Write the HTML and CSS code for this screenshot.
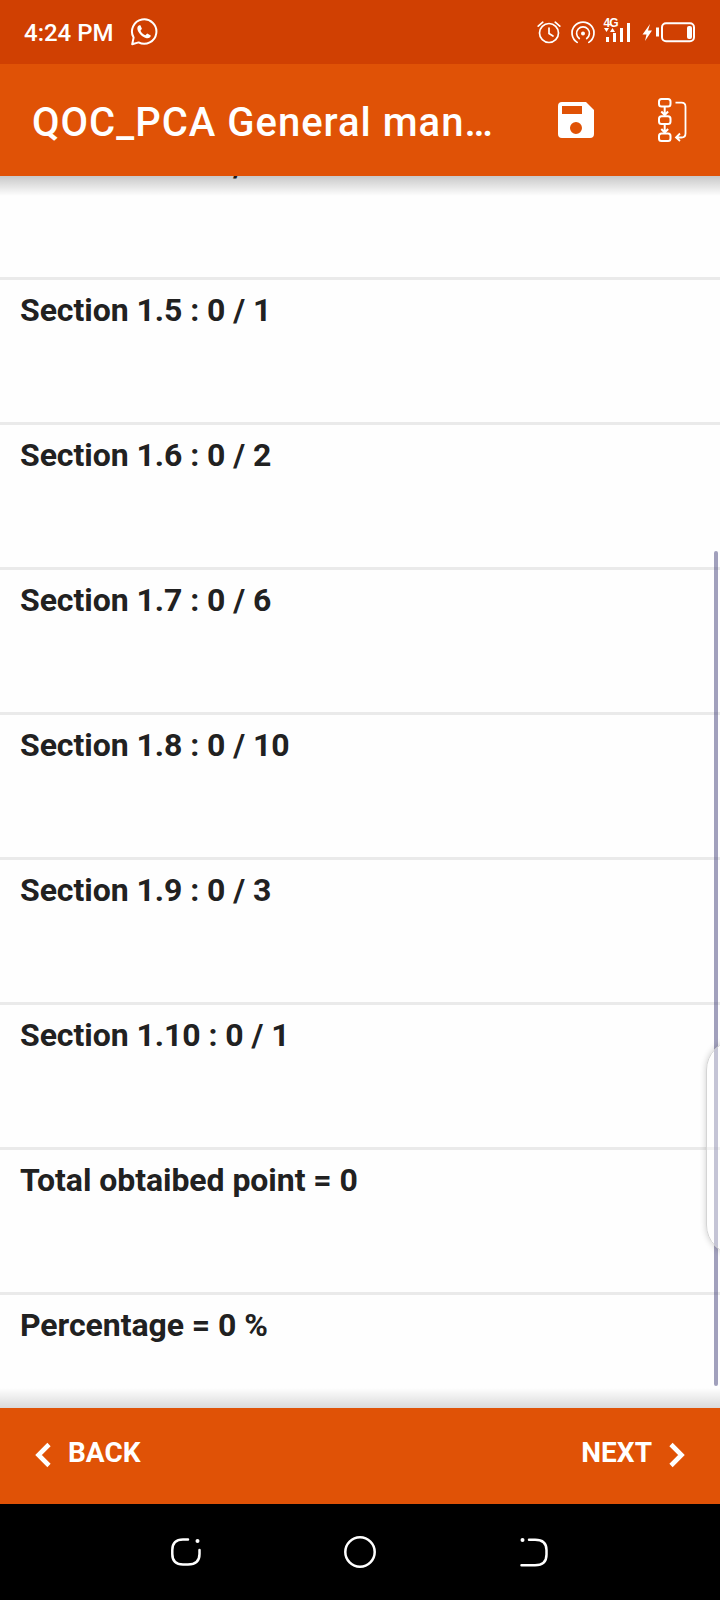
FILE: index.html
```html
<!DOCTYPE html>
<html lang="en">
<head>
<meta charset="utf-8">
<title>QOC_PCA General management</title>
<link rel="stylesheet" href="styles.css">
</head>
<body>
<div class="screen">
  <div class="status">
    <span class="time">4:24 PM</span>
    <svg class="whatsapp" width="28" height="30" viewBox="0 0 28 30" fill="none" stroke="#fff">
      <path d="M2.2 27.2 3.6 20.6A12.2 12.2 0 1 1 8.6 25.4Z" stroke-width="2" stroke-linejoin="round"/>
      <path d="M9.2 8.2c-1.6.8-2.3 2.6-1.6 4.8 1.400 4 5 7.300 9 8.200 2.200.4 4-.7 4.200-2.700l-3.600-2-1.800 1.800c-2.200-.8-4-2.500-4.900-4.600l1.400-1.900-1.500-3.600z" fill="#fff" stroke="none"/>
    </svg>
    <div class="indicators">
      <svg width="160" height="34" viewBox="0 0 160 34" fill="none" stroke="#fff">
        <g stroke-width="1.700" stroke-linecap="round">
          <circle cx="13" cy="17" r="9.500"/>
          <path d="M13 12v5.500l4 2.500M2.200 10.200 6.800 6.200M23.800 10.200 19.200 6.200"/>
          <path d="M41.200 26.400A11 11 0 1 1 52.800 26.400" />
          <path d="M43.300 22.500A6.400 6.400 0 1 1 50.700 22.500"/>
        </g>
        <circle cx="47" cy="17.500" r="2" fill="#fff" stroke="none"/>
        <g fill="#fff" stroke="none">
          <path d="M68 12h5l-2.500 4zM74 16h5l-2.500-4zM70 21h3v5h-3zM77 17h3v9h-3zM84 12h3v14h-3zM91 7h3v19h-3z"/>
          <path d="M114 8 106.500 18.500h4L109 25l7-10.500h-4z"/>
          <rect x="120" y="11.500" width="3" height="9"/>
          <rect x="151" y="10" width="5" height="13" rx="2"/>
        </g>
        <rect x="126" y="7.200" width="32" height="18" rx="4" stroke-width="2"/>
        <text class="network" x="67.500" y="11" textLength="15">4G</text>
      </svg>
    </div>
  </div>

  <header class="appbar">
    <h1 class="title">QOC_PCA General man…</h1>
    <svg class="save" width="36" height="36" viewBox="3 3 18 18" fill="#fff"><path d="M17 3H5a2 2 0 0 0-2 2v14a2 2 0 0 0 2 2h14a2 2 0 0 0 2-2V7l-4-4zm-5 16a3 3 0 1 1 0-6 3 3 0 0 1 0 6zm3-10H5V5h10v4z"/></svg>
    <svg class="flow" width="32" height="46" viewBox="0 0 32 46" fill="none" stroke="#fff" stroke-width="2">
      <rect x="2" y="2" width="11.500" height="7.600" rx="2.500"/>
      <rect x="2" y="19.300" width="11.500" height="7.600" rx="2.500"/>
      <rect x="2" y="36.500" width="11.500" height="7.600" rx="2.500"/>
      <path d="M7.700 10v8M4.300 14.500 7.700 18l3.400-3.500M7.700 27v8.500M4.300 32 7.700 35.500l3.400-3.500"/>
      <path d="M18.500 5.700H24.500q4 0 4 4V36.500q0 4-4 4H19M23 36.500l-4 4 4 3.500" stroke-width="1.800"/>
    </svg>
  </header>

  <main class="content">
    <div class="item"><p>Section 1.4 : 0 / 1.5</p></div>
    <div class="item"><p>Section 1.5 : 0 / 1</p></div>
    <div class="item"><p>Section 1.6 : 0 / 2</p></div>
    <div class="item"><p>Section 1.7 : 0 / 6</p></div>
    <div class="item"><p>Section 1.8 : 0 / 10</p></div>
    <div class="item"><p>Section 1.9 : 0 / 3</p></div>
    <div class="item"><p>Section 1.10 : 0 / 1</p></div>
    <div class="item"><p>Total obtaibed point = 0</p></div>
    <div class="item"><p>Percentage = 0 %</p></div>
    <div class="scrollbar"></div>
    <div class="edge-handle"></div>
  </main>

  <footer class="actions">
    <div class="action">
      <svg class="chevron" width="16" height="26" viewBox="0 0 16 26" fill="none" stroke="#fff" stroke-width="4.600"><path d="M14 2.500 3.500 13 14 23.500"/></svg>
      <span>BACK</span>
    </div>
    <div class="action">
      <span>NEXT</span>
      <svg class="chevron" width="16" height="26" viewBox="0 0 16 26" fill="none" stroke="#fff" stroke-width="4.600"><path d="M2 2.500 12.500 13 2 23.500"/></svg>
    </div>
  </footer>

  <nav class="sysnav">
    <svg width="32" height="32" viewBox="0 0 32 32" fill="none" stroke="#fff" stroke-width="2.500" stroke-linecap="round">
      <path d="M18 3.500H13Q2.300 3.500 2.300 14V18Q2.300 28.500 13 28.500H18Q29.500 28.500 29.500 18V14"/><circle cx="27.500" cy="5" r="2" fill="#fff" stroke="none"/>
    </svg>
    <svg width="32" height="32" viewBox="0 0 32 32" fill="none" stroke="#fff" stroke-width="2.500"><circle cx="16" cy="16" r="14.700"/></svg>
    <svg width="32" height="32" viewBox="0 0 32 32" fill="none" stroke="#fff" stroke-width="2.500" stroke-linecap="round">
      <path d="M11 3.700H17Q28.500 3.700 28.500 14V18.500Q28.500 29.300 17 29.300H3.500"/><circle cx="4.500" cy="4" r="2" fill="#fff" stroke="none"/>
    </svg>
  </nav>
</div>
</body>
</html>
```

FILE: styles.css
```css
* { box-sizing: border-box; margin: 0; padding: 0; }
body { font-family: Roboto, "Liberation Sans", sans-serif; background: #fff; }
svg { display: block; flex: none; }
.screen { width: 720px; height: 1600px; display: flex; flex-direction: column; overflow: hidden; }
.status { height: 64px; background: #d04002; color: #fff; display: flex; align-items: center; padding: 0 24px 0 24px; }
.time { font-size: 24px; font-weight: 500; line-height: 28px; padding-top: 2px; }
.whatsapp { margin-left: 16px; }
.indicators { margin-left: auto; padding-top: 2px; }
.network { font: 700 12px "Liberation Sans", sans-serif; fill: #fff; stroke: none; }
.appbar { height: 112px; background: #e05206; color: #fff; display: flex; align-items: center; padding: 0 31px 0 32px; }
.title { font-size: 40px; font-weight: 500; line-height: 48px; letter-spacing: 1px; white-space: nowrap; padding-top: 6px; }
.save { margin-left: auto; }
.flow { margin-left: 63px; }
.content { position: relative; height: 1232px; flex: none; overflow: hidden; background: #fefefe; }
.content::before, .content::after { content: ""; position: absolute; z-index: 1; left: 0; right: 0; height: 20px; }
.content::before { top: 0; background: linear-gradient(rgba(0, 0, 0, .21), transparent); }
.content::after { bottom: 0; background: linear-gradient(transparent, rgba(0, 0, 0, .14)); }
.item { height: 145px; border-bottom: 3px solid #eaeaea; color: #212121; font-size: 32px; font-weight: 700; line-height: 38px; letter-spacing: -.06px; padding: 11px 20px; }
.item:first-child { margin-top: -41px; }
.item:nth-child(9) { border-bottom: 0; }
.scrollbar { position: absolute; left: 714px; top: 375px; width: 4px; height: 835px; border-radius: 2px; background: rgba(66, 64, 120, .49); }
.edge-handle { position: absolute; left: 706px; top: 864px; width: 60px; height: 215px; border: 1px solid #d4d4d4; border-radius: 30px; background: rgba(255, 255, 255, .38); box-shadow: 0 0 6px rgba(0, 0, 0, .2); }
.actions { height: 96px; background: #e05206; color: #fff; display: flex; justify-content: space-between; align-items: center; padding: 0 35px 7px; font-size: 28px; font-weight: 700; line-height: 34px; }
.action { display: flex; align-items: center; gap: 17px; }
.chevron { margin-top: 5px; }
.sysnav { height: 96px; background: #000; display: flex; align-items: center; justify-content: space-between; padding: 0 170px; }
```
